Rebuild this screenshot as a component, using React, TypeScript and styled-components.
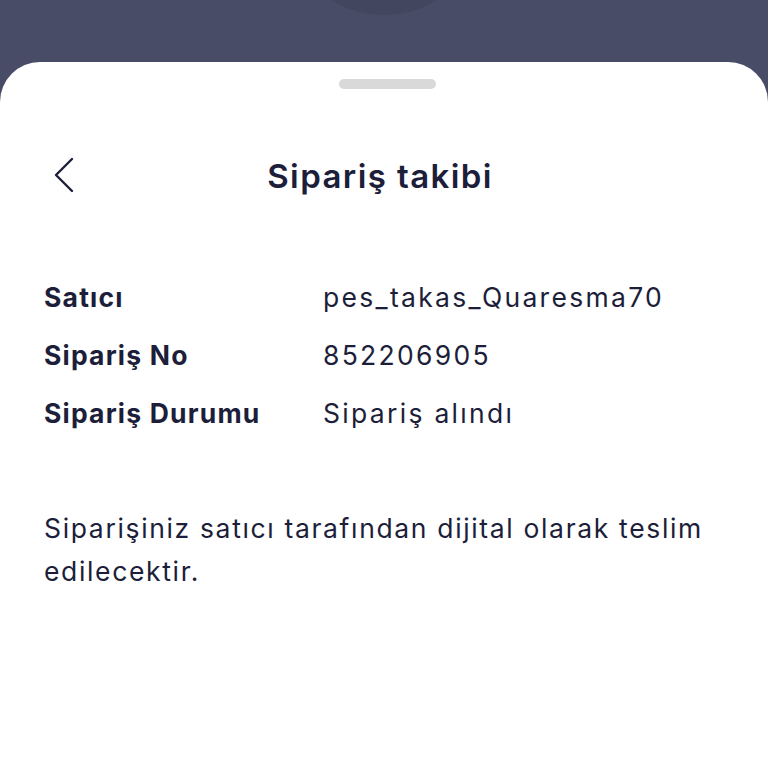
import React from "react";
import styled, { createGlobalStyle } from "styled-components";

const GlobalStyle = createGlobalStyle`
  html, body {
    margin: 0;
    padding: 0;
    background: #484c66;
    font-family: "Inter", "Lato", sans-serif;
  }
`;

const rows = [
  { label: "Satıcı", value: "pes_takas_Quaresma70" },
  { label: "Sipariş No", value: "852206905" },
  { label: "Sipariş Durumu", value: "Sipariş alındı" },
];

function App() {
  return (
    <>
      <GlobalStyle />
      <Screen>
        <TopBar>
          <Notch />
        </TopBar>
        <Sheet>
          <Handle />
          <Header>
            <BackButton aria-label="Geri">
              <svg width="22" height="36" viewBox="0 0 22 36" fill="none">
                <path
                  d="M19 2 L3 18 L19 34"
                  stroke="#1c1e3a"
                  strokeWidth="2.4"
                  strokeLinecap="round"
                  strokeLinejoin="round"
                />
              </svg>
            </BackButton>
            <Title>Sipariş takibi</Title>
          </Header>
          <InfoList>
            {rows.map((r) => (
              <InfoRow key={r.label}>
                <Label>{r.label}</Label>
                <Value>{r.value}</Value>
              </InfoRow>
            ))}
          </InfoList>
          <Note>Siparişiniz satıcı tarafından dijital olarak teslim edilecektir.</Note>
        </Sheet>
      </Screen>
    </>
  );
}

export default App;

const Screen = styled.div`
  width: 768px;
  height: 768px;
  overflow: hidden;
  display: flex;
  flex-direction: column;
  background: #484c66;
`;

const TopBar = styled.div`
  height: 62px;
  flex-shrink: 0;
  display: flex;
  justify-content: center;
  overflow: hidden;
`;

const Notch = styled.div`
  flex-shrink: 0;
  width: 200px;
  height: 200px;
  margin-top: -185px;
  border-radius: 50%;
  background: #43465f;
`;

const Sheet = styled.div`
  flex: 1;
  background: #ffffff;
  border-radius: 40px 40px 0 0;
  display: flex;
  flex-direction: column;
  padding: 17px 44px 0;
  color: #1c1e3a;
`;

const Handle = styled.div`
  align-self: center;
  width: 97px;
  height: 10px;
  border-radius: 5px;
  background: #d9d9d9;
  margin-left: 7px;
`;

const Header = styled.div`
  position: relative;
  height: 60px;
  margin-top: 57px;
  display: flex;
  align-items: center;
  justify-content: center;
`;

const BackButton = styled.button`
  position: absolute;
  left: 9px;
  top: 11px;
  border: none;
  background: none;
  padding: 0;
  display: flex;
`;

const Title = styled.h1`
  margin: 0 8px 0 0;
  font-size: 33px;
  font-weight: 600;
  letter-spacing: 1.4px;
`;

const InfoList = styled.div`
  margin-top: 73px;
  display: flex;
  flex-direction: column;
  gap: 22px;
`;

const InfoRow = styled.div`
  display: flex;
  align-items: center;
  height: 36px;
  font-size: 26.5px;
`;

const Label = styled.div`
  width: 279px;
  font-weight: 700;
  letter-spacing: 1.2px;
`;

const Value = styled.div`
  font-weight: 400;
  letter-spacing: 2.3px;
`;

const Note = styled.p`
  margin: 76px 0 0;
  font-size: 26.5px;
  line-height: 43px;
  font-weight: 400;
  letter-spacing: 1.65px;
`;
